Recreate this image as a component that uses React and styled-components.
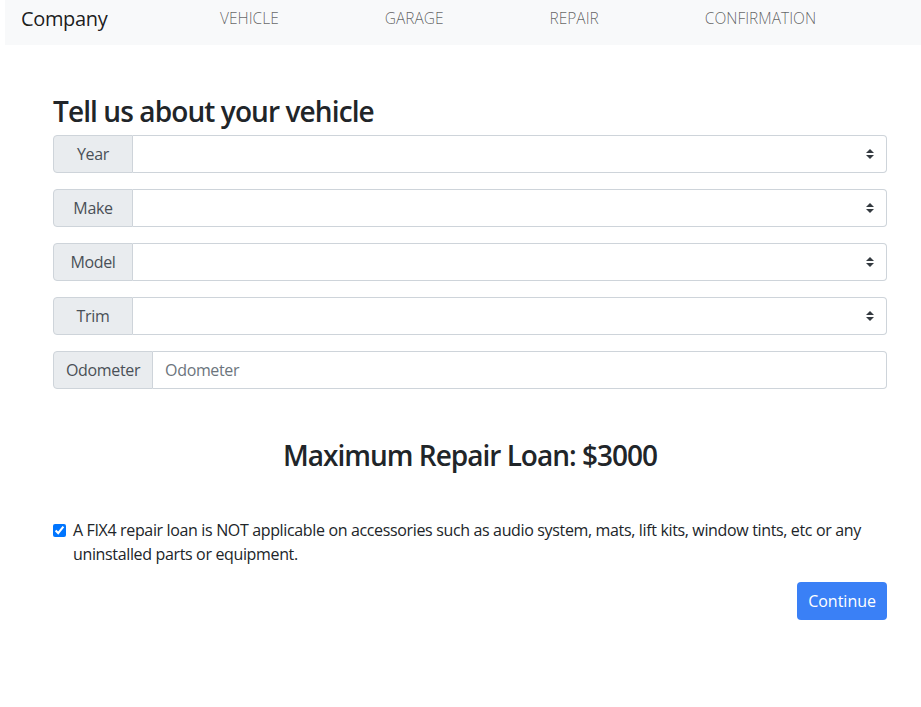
import React, { useState } from "react";
import styled, { createGlobalStyle } from "styled-components";

const GlobalStyle = createGlobalStyle`
  * { box-sizing: border-box; }
  body {
    margin: 0;
    background: #fff;
    font-family: "Open Sans", "Noto Sans", sans-serif;
    color: #212529;
    letter-spacing: -0.35px;
  }
`;

const fields = [
  { name: "Year", type: "select" },
  { name: "Make", type: "select" },
  { name: "Model", type: "select" },
  { name: "Trim", type: "select" },
  { name: "Odometer", type: "input" },
];

const steps = ["VEHICLE", "GARAGE", "REPAIR", "CONFIRMATION"];

const SelectArrows = () => (
  <Arrows width="8" height="10" viewBox="0 0 4 5">
    <path d="M2 0L0 2h4zm0 5L0 3h4z" fill="#343a40" />
  </Arrows>
);

const App = () => {
  const [agreed, setAgreed] = useState(true);

  return (
    <>
      <GlobalStyle />
      <Navbar>
        <Brand>Company</Brand>
        <NavList>
          {steps.map((step) => (
            <NavLink key={step}>{step}</NavLink>
          ))}
        </NavList>
      </Navbar>
      <Container>
        <Title>Tell us about your vehicle</Title>
        {fields.map((field) => (
          <InputGroup key={field.name}>
            <Prepend fixed={field.type === "select"}>{field.name}</Prepend>
            {field.type === "select" ? (
              <SelectWrap>
                <Select defaultValue="">
                  <option value=""></option>
                </Select>
                <SelectArrows />
              </SelectWrap>
            ) : (
              <TextInput placeholder={field.name} />
            )}
          </InputGroup>
        ))}
        <LoanTitle>Maximum Repair Loan: $3000</LoanTitle>
        <Check>
          <CheckBox
            type="checkbox"
            checked={agreed}
            onChange={(e) => setAgreed(e.target.checked)}
          />
          <CheckLabel>
            A FIX4 repair loan is NOT applicable on accessories such as audio system, mats,
            lift kits, window tints, etc or any uninstalled parts or equipment.
          </CheckLabel>
        </Check>
        <Actions>
          <Button>Continue</Button>
        </Actions>
      </Container>
    </>
  );
};

export default App;

const Navbar = styled.nav`
  margin-left: 5px;
  height: 45px;
  background-color: #f8f9fa;
  display: flex;
  align-items: flex-start;
  padding: 4px 0 0 16px;
`;

const Brand = styled.div`
  width: 146px;
  font-size: 20px;
  line-height: 30px;
  color: rgba(0, 0, 0, 0.9);
`;

const NavList = styled.div`
  display: flex;
`;

const NavLink = styled.div`
  padding: 0 53px;
  font-size: 15.5px;
  font-weight: 300;
  line-height: 28px;
  letter-spacing: 0;
  color: rgba(0, 0, 0, 0.62);
`;

const Container = styled.div`
  width: 834px;
  margin-left: 53px;
  padding-top: 50px;
`;

const Title = styled.h3`
  margin: 0 0 6px;
  font-size: 28px;
  font-weight: 600;
  line-height: 1.2;
  letter-spacing: -0.9px;
`;

const InputGroup = styled.div`
  display: flex;
  height: 38px;
  margin-bottom: 16px;
`;

const Prepend = styled.div`
  flex: none;
  width: ${(p) => (p.fixed ? "80px" : "auto")};
  display: flex;
  align-items: center;
  justify-content: center;
  padding: 0 12px;
  font-size: 16px;
  color: #495057;
  background-color: #e9ecef;
  border: 1px solid #ced4da;
  border-radius: 4px 0 0 4px;
`;

const SelectWrap = styled.div`
  position: relative;
  flex: 1;
`;

const Select = styled.select`
  appearance: none;
  width: 100%;
  height: 100%;
  padding: 6px 28px 6px 12px;
  font: inherit;
  font-size: 16px;
  color: #495057;
  background: #fff;
  border: 1px solid #ced4da;
  border-left: none;
  border-radius: 0 4px 4px 0;
  outline: none;
`;

const Arrows = styled.svg`
  position: absolute;
  right: 13px;
  top: 14px;
  pointer-events: none;
`;

const TextInput = styled.input`
  flex: 1;
  height: 100%;
  padding: 6px 12px;
  font: inherit;
  font-size: 16px;
  letter-spacing: -0.35px;
  color: #495057;
  border: 1px solid #ced4da;
  border-left: none;
  border-radius: 0 4px 4px 0;
  outline: none;
  &::placeholder {
    color: #6c757d;
  }
`;

const LoanTitle = styled.h3`
  margin: 50px 0 46px;
  text-align: center;
  font-size: 28px;
  font-weight: 600;
  line-height: 1.2;
  letter-spacing: -1px;
`;

const Check = styled.label`
  display: flex;
  align-items: flex-start;
`;

const CheckBox = styled.input`
  flex: none;
  width: 13px;
  height: 13px;
  margin: 6px 7px 0 0;
  accent-color: #0075ff;
`;

const CheckLabel = styled.span`
  font-size: 16px;
  line-height: 24px;
  color: #212529;
`;

const Actions = styled.div`
  display: flex;
  justify-content: flex-end;
  margin-top: 16px;
`;

const Button = styled.button`
  height: 38px;
  padding: 0 11px;
  font: inherit;
  font-size: 16px;
  color: #fff;
  background-color: #3a80f6;
  border: none;
  border-radius: 4px;
  cursor: pointer;
`;
